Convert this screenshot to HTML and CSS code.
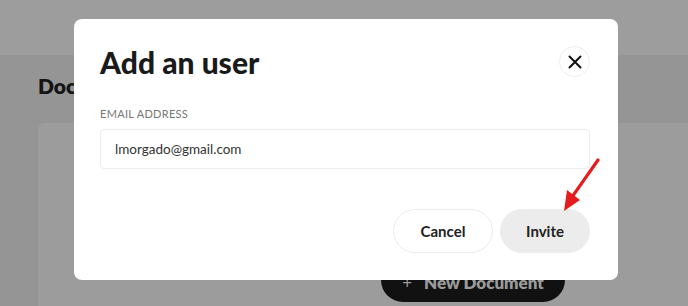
FILE: index.html
```html
<!DOCTYPE html>
<html lang="en">
<head>
  <meta charset="UTF-8">
  <title>Documents</title>
  <link rel="stylesheet" href="styles.css">
</head>
<body>
  <div class="page">
    <div class="topbar"></div>
    <div class="main">
      <h2 class="page-title">Documents</h2>
      <div class="card">
        <button class="new-doc"><span class="plus">+</span> New Document</button>
      </div>
    </div>
  </div>

  <div class="overlay">
    <div class="modal">
      <div class="modal-head">
        <h1>Add an user</h1>
        <button class="close-btn">
          <svg width="14" height="14" viewBox="0 0 14 14"><path d="M1.5 1.5l11 11M12.5 1.5l-11 11" stroke="#111" stroke-width="2" stroke-linecap="round"/></svg>
        </button>
      </div>
      <label class="field-label">EMAIL ADDRESS</label>
      <div class="input">lmorgado@gmail.com</div>
      <div class="actions">
        <button class="btn btn-cancel">Cancel</button>
        <button class="btn btn-invite">Invite</button>
      </div>
    </div>
  </div>

  <svg class="arrow" width="50" height="60" viewBox="0 0 50 60">
    <path d="M45 2L19 39" stroke="#e51c1c" stroke-width="3.2" stroke-linecap="round"/>
    <path d="M11 53L14 32L27 42Z" fill="#e51c1c"/>
  </svg>
</body>
</html>
```

FILE: styles.css
```css
body {
  margin: 0;
  font-family: Lato, "Open Sans", sans-serif;
  background-color: #959595;
  overflow: hidden;
}
.page {
  height: 306px;
  display: flex;
  flex-direction: column;
}
.topbar {
  height: 55px;
  background-color: #9d9d9d;
}
.main {
  flex: 1;
  padding-left: 38px;
  display: flex;
  flex-direction: column;
}
.page-title {
  margin: 18px 0 0;
  height: 50px;
  font-size: 21px;
  font-weight: 800;
  color: #141414;
}
.card {
  flex: 1;
  background-color: #9c9c9c;
  border-radius: 6px 0 0 0;
  padding: 135px 0 0 343px;
}
.new-doc {
  width: 184px;
  height: 44px;
  border: none;
  border-radius: 22px;
  background-color: #111;
  color: #9a9a9a;
  font-family: inherit;
  font-size: 17px;
  font-weight: 800;
  padding-top: 5px;
}
.plus {
  margin-right: 8px;
  font-weight: 400;
}
.overlay {
  position: fixed;
  top: 19px;
  left: 74px;
}
.modal {
  width: 544px;
  height: 261px;
  box-sizing: border-box;
  background: #fff;
  border-radius: 8px;
  padding: 27px 28px 0 26px;
  display: flex;
  flex-direction: column;
}
.modal-head {
  display: flex;
  justify-content: space-between;
  align-items: center;
}
.modal-head h1 {
  margin: 0;
  font-size: 30px;
  font-weight: 900;
  color: #1a1a1a;
  line-height: 30px;
}
.close-btn {
  width: 31px;
  height: 31px;
  border-radius: 50%;
  border: 1px solid #eee;
  background: #fff;
  display: flex;
  align-items: center;
  justify-content: center;
  padding: 0;
}
.field-label {
  margin-top: 30px;
  font-size: 11px;
  letter-spacing: 0.3px;
  color: #777;
  line-height: 14px;
}
.input {
  margin-top: 8px;
  height: 40px;
  box-sizing: border-box;
  border: 1px solid #ececec;
  border-radius: 4px;
  padding: 0 14px;
  display: flex;
  align-items: center;
  font-size: 13.5px;
  color: #333;
}
.actions {
  margin-top: 40px;
  display: flex;
  justify-content: flex-end;
  gap: 7px;
}
.btn {
  height: 44px;
  border-radius: 22px;
  font-family: inherit;
  font-size: 15px;
  font-weight: 700;
  color: #222;
}
.btn-cancel {
  width: 100px;
  background: #fff;
  border: 1px solid #ececec;
}
.btn-invite {
  width: 90px;
  background: #ececec;
  border: none;
}
.arrow {
  position: fixed;
  left: 553px;
  top: 158px;
}
```
